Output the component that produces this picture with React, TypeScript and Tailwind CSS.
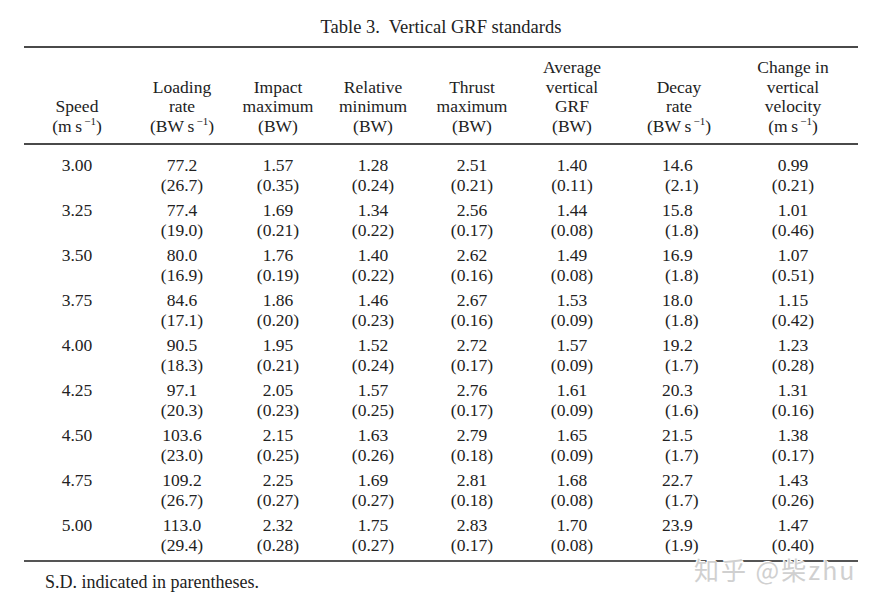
import React from "react";

const cols = "grid grid-cols-[106px_104px_88px_102px_96px_104px_110px_118px]";

const Unit = ({ pre }: { pre: string }) => (
  <span>
    ({pre}&thinsp;s<sup className="text-[11px] -top-[7px]">&thinsp;−1</sup>)
  </span>
);

const headers: React.ReactNode[][] = [
  ["Speed", <Unit pre="m" key="u" />],
  ["Loading", "rate", <Unit pre="BW" key="u" />],
  ["Impact", "maximum", "(BW)"],
  ["Relative", "minimum", "(BW)"],
  ["Thrust", "maximum", "(BW)"],
  ["Average", "vertical", "GRF", "(BW)"],
  ["Decay", "rate", <Unit pre="BW" key="u" />],
  ["Change in", "vertical", "velocity", <Unit pre="m" key="u" />],
];

const rows: string[][] = [
  ["3.00", "77.2", "(26.7)", "1.57", "(0.35)", "1.28", "(0.24)", "2.51", "(0.21)", "1.40", "(0.11)", "14.6", "(2.1)", "0.99", "(0.21)"],
  ["3.25", "77.4", "(19.0)", "1.69", "(0.21)", "1.34", "(0.22)", "2.56", "(0.17)", "1.44", "(0.08)", "15.8", "(1.8)", "1.01", "(0.46)"],
  ["3.50", "80.0", "(16.9)", "1.76", "(0.19)", "1.40", "(0.22)", "2.62", "(0.16)", "1.49", "(0.08)", "16.9", "(1.8)", "1.07", "(0.51)"],
  ["3.75", "84.6", "(17.1)", "1.86", "(0.20)", "1.46", "(0.23)", "2.67", "(0.16)", "1.53", "(0.09)", "18.0", "(1.8)", "1.15", "(0.42)"],
  ["4.00", "90.5", "(18.3)", "1.95", "(0.21)", "1.52", "(0.24)", "2.72", "(0.17)", "1.57", "(0.09)", "19.2", "(1.7)", "1.23", "(0.28)"],
  ["4.25", "97.1", "(20.3)", "2.05", "(0.23)", "1.57", "(0.25)", "2.76", "(0.17)", "1.61", "(0.09)", "20.3", "(1.6)", "1.31", "(0.16)"],
  ["4.50", "103.6", "(23.0)", "2.15", "(0.25)", "1.63", "(0.26)", "2.79", "(0.18)", "1.65", "(0.09)", "21.5", "(1.7)", "1.38", "(0.17)"],
  ["4.75", "109.2", "(26.7)", "2.25", "(0.27)", "1.69", "(0.27)", "2.81", "(0.18)", "1.68", "(0.08)", "22.7", "(1.7)", "1.43", "(0.26)"],
  ["5.00", "113.0", "(29.4)", "2.32", "(0.28)", "1.75", "(0.27)", "2.83", "(0.17)", "1.70", "(0.08)", "23.9", "(1.9)", "1.47", "(0.40)"],
];

export default function App() {
  return (
    <div
      className="relative w-[874px] h-[603px] bg-white text-[#222] overflow-hidden"
      style={{ fontFamily: '"Liberation Serif", "Times New Roman", serif' }}
    >
      <div className="pt-[16px] pl-[8px] h-[46px] text-center text-[18.5px] leading-[22px]">
        Table 3.&nbsp; Vertical GRF standards
      </div>
      <div className="ml-[24px] w-[834px]">
        <div className="h-[2px] bg-[#4a4a4a]" />
        <div className={`${cols} items-end pt-[10px] pb-[7px] text-[17.5px] leading-[19.5px]`}>
          {headers.map((h, i) => (
            <div key={i} className="flex flex-col items-center">
              {h.map((l, j) => (
                <div key={j} className="whitespace-nowrap">
                  {l}
                </div>
              ))}
            </div>
          ))}
        </div>
        <div className="h-[2px] bg-[#4a4a4a]" />
        <div className="pt-[10px] pb-[5px] text-[17.5px] leading-[20px]">
          {rows.map((r, i) => (
            <div key={i} className={`${cols} ${i < rows.length - 1 ? "pb-[5px]" : ""}`}>
              <div className="text-center">{r[0]}</div>
              {[0, 1, 2, 3, 4, 5, 6].map((c) => {
                const main = r[1 + c * 2];
                const sd = r[2 + c * 2];
                if (c === 5) {
                  return (
                    <div key={c} className="flex flex-col">
                      <div className="pl-[38px]">{main}</div>
                      <div className="pl-[41px]">{sd}</div>
                    </div>
                  );
                }
                return (
                  <div key={c} className="flex flex-col items-center">
                    <div>{main}</div>
                    <div>{sd}</div>
                  </div>
                );
              })}
            </div>
          ))}
        </div>
        <div className="h-[1.5px] bg-[#555]" />
      </div>
      <div className="pl-[45px] pt-[9px] text-[18px] leading-[22px]">S.D. indicated in parentheses.</div>
      <div
        className="absolute left-[694px] top-[557px] text-[25px] leading-[24px] text-[#d0d0d0] whitespace-nowrap tracking-[2px]"
        style={{
          fontFamily: '"Noto Sans CJK SC", "Noto Sans", sans-serif',
          textShadow: "1px 1px 0 #fff, -1px -1px 0 #fff",
        }}
      >
        知乎 @柴zhu
      </div>
    </div>
  );
}
